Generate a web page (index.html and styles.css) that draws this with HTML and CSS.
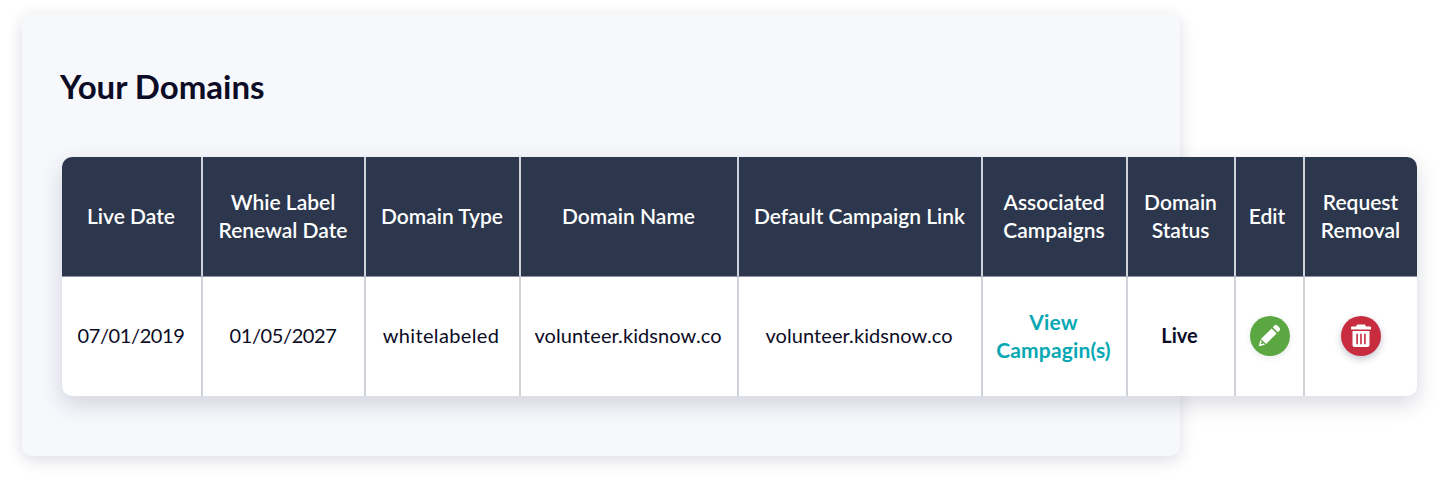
FILE: index.html
```html
<!DOCTYPE html>
<html lang="en">
<head>
<meta charset="utf-8">
<title>Your Domains</title>
<link rel="stylesheet" href="styles.css">
</head>
<body>
<section class="card">
  <h1 class="title">Your Domains</h1>
  <table class="domains">
    <colgroup>
      <col class="c1"><col class="c2"><col class="c3"><col class="c4"><col class="c5"><col class="c6"><col class="c7"><col class="c8"><col class="c9">
    </colgroup>
    <thead>
      <tr>
        <th>Live Date</th>
        <th>Whie Label<br>Renewal Date</th>
        <th>Domain Type</th>
        <th>Domain Name</th>
        <th>Default Campaign Link</th>
        <th>Associated<br>Campaigns</th>
        <th>Domain<br>Status</th>
        <th class="th-edit">Edit</th>
        <th>Request<br>Removal</th>
      </tr>
    </thead>
    <tbody>
      <tr>
        <td class="date">07/01/2019</td>
        <td class="date">01/05/2027</td>
        <td class="type">whitelabeled</td>
        <td class="name">volunteer.kidsnow.co</td>
        <td class="name">volunteer.kidsnow.co</td>
        <td class="campaigns"><a class="link" href="#">View<br>Campagin(s)</a></td>
        <td class="status">Live</td>
        <td class="cell-action">
          <a class="action edit" href="#" aria-label="Edit">
            <svg class="pencil" viewBox="0 0 24 24"><path fill="#fff" fill-rule="evenodd" d="M17.300 1.500c.8-.8 2-.8 2.800 0l2.400 2.400c.8.8.8 2 0 2.800l-1.900 1.900-5.200-5.200 1.900-1.900zM14.200 4.600l5.200 5.200L8.500 20.900 3 15.600 14.200 4.600zM2.400 16.700l4.900 4.900L.8 23.200l1.600-6.500zM3.900 18.200l-1 3 3-.9-2-2.100z"/></svg>
          </a>
        </td>
        <td class="cell-action">
          <a class="action remove" href="#" aria-label="Request removal">
            <svg class="trash" viewBox="0 0 20 23"><path fill="#fff" fill-rule="evenodd" d="M6.600.4h6.800c.4 0 .7.2.9.6l.7 1.500h4c.5 0 1 .4 1 1v2H0v-2c0-.6.5-1 1-1h4l.7-1.500c.2-.4.5-.6.900-.6zM1.500 7h17v14c0 1.100-.9 2-2 2h-13c-1.100 0-2-.9-2-2V7zm3.800 2.800v10.400h1.600V9.800H5.300zm3.900 0v10.400h1.600V9.800H9.200zm3.900 0v10.400h1.600V9.800h-1.600z"/></svg>
          </a>
        </td>
      </tr>
    </tbody>
  </table>
</section>
</body>
</html>
```
FILE: styles.css
```css
* { box-sizing: border-box; }
html, body { background: #fff; }
body {
  margin: 0;
  padding: 14px 0 0 22px;
  height: 485px;
  overflow: hidden;
  font-family: "Lato", "Noto Sans", "Liberation Sans", sans-serif;
  color: #0c0c26;
}
.card {
  width: 1158px;
  height: 442px;
  padding: 53px 0 0 38px;
  background: #f7f8fc;
  border-radius: 10px;
  box-shadow: 0 4px 16px rgba(40, 45, 80, .16);
}
.title {
  margin: 0 0 52px;
  font-size: 33px;
  line-height: 38px;
  font-weight: 700;
}
.domains {
  width: 1355px;
  margin-left: 2px;
  table-layout: fixed;
  border-collapse: separate;
  border-spacing: 0;
  background: #fff;
  border-radius: 10px;
  box-shadow: 0 8px 22px rgba(40, 45, 80, .18);
}
.c1 { width: 141px; }
.c2 { width: 163px; }
.c3 { width: 155px; }
.c4 { width: 218px; }
.c5 { width: 244px; }
.c6 { width: 145px; }
.c7 { width: 108px; }
.c8 { width: 69px; }
.c9 { width: 112px; }
th, td {
  padding: 0 1px 2px 0;
  text-align: center;
  vertical-align: middle;
  border-right: 2px solid #d0d2da;
  line-height: 28px;
}
th:last-child, td:last-child { border-right: 0; }
th {
  height: 120px;
  background: #2c374d;
  color: #fff;
  font-size: 21px;
  font-weight: 600;
  border-bottom: 1px solid #8d93a3;
}
th:first-child { border-top-left-radius: 10px; }
th:last-child { border-top-right-radius: 10px; }
.th-edit { padding-right: 5px; }
td {
  height: 119px;
  font-size: 20px;
  font-weight: 400;
  padding-bottom: 3px;
}
.date { letter-spacing: -.4px; }
.type { letter-spacing: .35px; padding-right: 3px; }
.name { letter-spacing: .08px; padding-right: 2px; }
.campaigns { padding: 0 2px 2px 0; }
.link {
  display: inline-block;
  color: #06a8b3;
  font-size: 21px;
  font-weight: 700;
  letter-spacing: .15px;
  text-decoration: none;
}
.status { font-weight: 700; padding-right: 3px; }
.cell-action { padding: 0 0 2px; }
.action {
  display: inline-flex;
  align-items: center;
  justify-content: center;
  width: 40px;
  height: 40px;
  border-radius: 50%;
  vertical-align: middle;
}
.edit { background: #5ba843; box-shadow: 0 2px 6px rgba(40, 45, 80, .1); }
.remove { background: #c82c3f; box-shadow: 0 3px 7px rgba(40, 45, 80, .28); }
.pencil { width: 23px; height: 23px; }
.trash { width: 20px; height: 23px; }
```
